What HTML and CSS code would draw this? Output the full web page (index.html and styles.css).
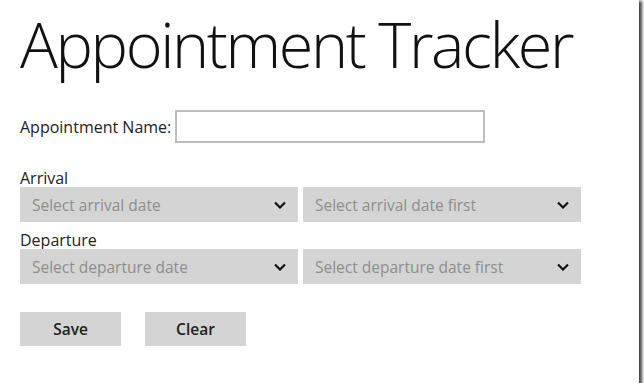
FILE: index.html
```html
<!DOCTYPE html>
<html lang="en">
<head>
    <meta charset="UTF-8">
    <title>Appointment Tracker</title>
    <link rel="stylesheet" href="styles.css">
</head>
<body>
    <div class="window">
        <h1>Appointment Tracker</h1>

        <div class="name-row">
            <label for="appt-name">Appointment Name:</label>
            <input id="appt-name" type="text">
        </div>

        <div class="field-label">Arrival</div>
        <div class="select-row">
            <div class="select">
                <span>Select arrival date</span>
                <svg class="chevron" viewBox="0 0 12 8"><path d="M1 1.5l5 5 5-5"/></svg>
            </div>
            <div class="select">
                <span>Select arrival date first</span>
                <svg class="chevron" viewBox="0 0 12 8"><path d="M1 1.5l5 5 5-5"/></svg>
            </div>
        </div>

        <div class="field-label">Departure</div>
        <div class="select-row">
            <div class="select">
                <span>Select departure date</span>
                <svg class="chevron" viewBox="0 0 12 8"><path d="M1 1.5l5 5 5-5"/></svg>
            </div>
            <div class="select">
                <span>Select departure date first</span>
                <svg class="chevron" viewBox="0 0 12 8"><path d="M1 1.5l5 5 5-5"/></svg>
            </div>
        </div>

        <div class="buttons">
            <button class="btn">Save</button>
            <button class="btn">Clear</button>
        </div>
    </div>
</body>
</html>
```

FILE: styles.css
```css
body {
    margin: 0;
    background-color: #fff;
    font-family: "Open Sans", "Noto Sans", sans-serif;
    color: #222;
}

.window {
    width: 619px;
    height: 383px;
    padding-left: 20px;
    background-color: #fff;
    box-shadow: 2px 2px 3px 1px rgba(0, 0, 0, 0.75);
    box-sizing: content-box;
    overflow: hidden;
}

h1 {
    margin: 0;
    padding-top: 4px;
    font-size: 63px;
    font-weight: 300;
    line-height: 80px;
    letter-spacing: -2.4px;
    color: #111;
}

.name-row {
    display: flex;
    align-items: center;
    gap: 4px;
    margin-top: 26px;
}

.name-row label {
    font-size: 16px;
}

.name-row input {
    width: 310px;
    height: 33px;
    box-sizing: border-box;
    border: 2px solid #bdbdbd;
    background: #fff;
    margin: 0;
}

.field-label {
    font-size: 16px;
    line-height: 18px;
}

.name-row + .field-label {
    margin-top: 26px;
}

.select-row + .field-label {
    margin-top: 9px;
}

.select-row {
    display: flex;
    gap: 5px;
}

.select {
    width: 278px;
    height: 35px;
    box-sizing: border-box;
    background-color: #d4d4d4;
    display: flex;
    align-items: center;
    justify-content: space-between;
    padding: 0 12px 0 12px;
    font-size: 15.5px;
    color: #8e8e8e;
}

.chevron {
    width: 12px;
    height: 8px;
}

.chevron path {
    fill: none;
    stroke: #111;
    stroke-width: 2.2;
}

.buttons {
    display: flex;
    gap: 24px;
    margin-top: 28px;
}

.btn {
    width: 101px;
    height: 34px;
    border: none;
    background-color: #d4d4d4;
    font-family: "Open Sans", "Noto Sans", sans-serif;
    font-size: 15.5px;
    font-weight: 600;
    color: #222;
    padding: 0;
}
```
